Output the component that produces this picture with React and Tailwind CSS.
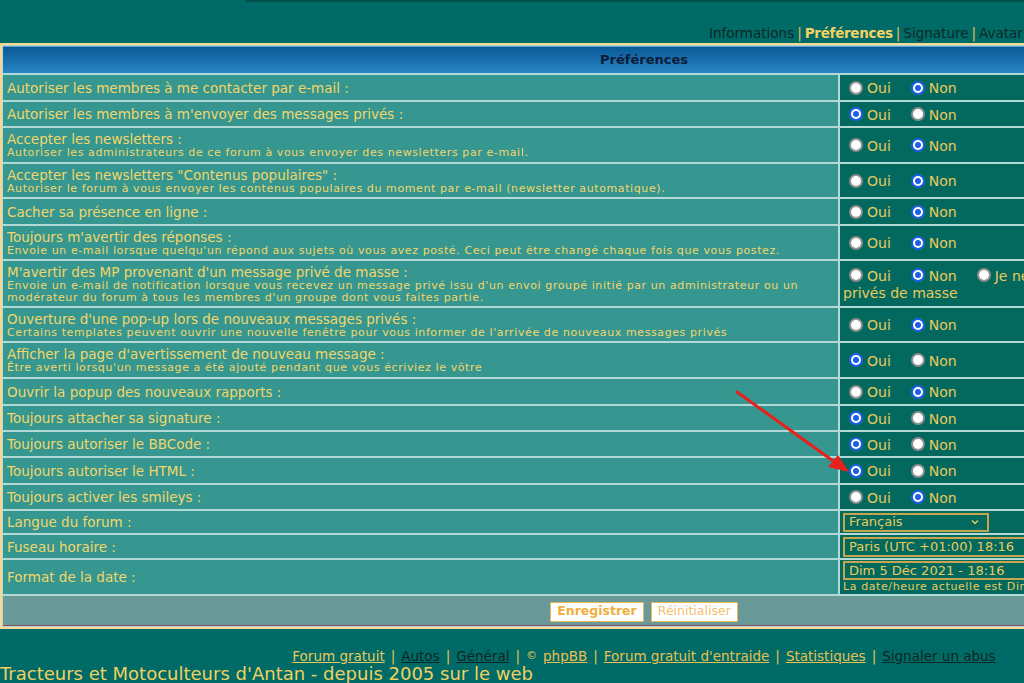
import React from "react";

const rows = [
  { t: "Autoriser les membres à me contacter par e-mail :", h: "h-[25px]", v: [false, true] },
  { t: "Autoriser les membres à m'envoyer des messages privés :", h: "h-[24px]", v: [true, false] },
  {
    t: "Accepter les newsletters :",
    d: "Autoriser les administrateurs de ce forum à vous envoyer des newsletters par e-mail.",
    h: "h-[34px]",
    v: [false, true],
  },
  {
    t: 'Accepter les newsletters "Contenus populaires" :',
    d: "Autoriser le forum à vous envoyer les contenus populaires du moment par e-mail (newsletter automatique).",
    h: "h-[33px]",
    v: [false, true],
  },
  { t: "Cacher sa présence en ligne :", h: "h-[25px]", v: [false, true] },
  {
    t: "Toujours m'avertir des réponses :",
    d: "Envoie un e-mail lorsque quelqu'un répond aux sujets où vous avez posté. Ceci peut être changé chaque fois que vous postez.",
    h: "h-[33px]",
    v: [false, true],
  },
  {
    t: "M'avertir des MP provenant d'un message privé de masse :",
    d: "Envoie un e-mail de notification lorsque vous recevez un message privé issu d'un envoi groupé initié par un administrateur ou un modérateur du forum à tous les membres d'un groupe dont vous faites partie.",
    h: "h-[45px]",
    v: [false, true],
    third: true,
  },
  {
    t: "Ouverture d'une pop-up lors de nouveaux messages privés :",
    d: "Certains templates peuvent ouvrir une nouvelle fenêtre pour vous informer de l'arrivée de nouveaux messages privés",
    h: "h-[33px]",
    v: [false, true],
  },
  {
    t: "Afficher la page d'avertissement de nouveau message :",
    d: "Être averti lorsqu'un message a été ajouté pendant que vous écriviez le vôtre",
    h: "h-[34px]",
    v: [true, false],
  },
  { t: "Ouvrir la popup des nouveaux rapports :", h: "h-[25px]", v: [false, true] },
  { t: "Toujours attacher sa signature :", h: "h-[24px]", v: [true, false] },
  { t: "Toujours autoriser le BBCode :", h: "h-[24px]", v: [true, false] },
  { t: "Toujours autoriser le HTML :", h: "h-[25px]", v: [true, false] },
  { t: "Toujours activer les smileys :", h: "h-[24px]", v: [false, true] },
];

function Radio({ on }) {
  if (on) {
    return (
      <span className="w-[14px] h-[14px] rounded-full bg-[#1d5fe6] flex items-center justify-center shrink-0">
        <span className="w-[10px] h-[10px] rounded-full bg-white flex items-center justify-center">
          <span className="w-[6px] h-[6px] rounded-full bg-[#1d5fe6]" />
        </span>
      </span>
    );
  }
  return <span className="w-[14px] h-[14px] rounded-full bg-white border-[2.5px] border-[#8e8e8e] shrink-0" />;
}

function Choice({ on, label, last }) {
  return (
    <span className={"flex items-center gap-[4px] " + (last ? "" : "mr-[20px]")}>
      <Radio on={on} />
      <span className="pt-[2px]">{label}</span>
    </span>
  );
}

function Label({ t, d }) {
  return (
    <div className="bg-[#35978f] px-[4px] flex flex-col justify-center text-[#f3d56b]">
      <div className="text-[13.5px] leading-[16px]">{t}</div>
      {d && <div className="text-[11px] leading-[12px] tracking-[0.6px]">{d}</div>}
    </div>
  );
}

export default function App() {
  return (
    <div className="w-[1024px] h-[683px] overflow-hidden bg-[#006b66] relative font-['DejaVu_Sans',sans-serif]">
      <div className="w-[1288px]">
        <div className="h-[2px] ml-[245px] bg-[#00504c]" />
        {/* onglets */}
        <div className="h-[41px] pl-[709px] flex items-end pb-[1px] text-[13.5px] leading-[18px] whitespace-nowrap text-[#0e2826]">
          <span>Informations</span>
          <span className="text-[#e8c050] mx-[3px]">|</span>
          <span className="font-bold text-[#f4d062] tracking-[-0.3px]">Préférences</span>
          <span className="text-[#e8c050] mx-[3px]">|</span>
          <span>Signature</span>
          <span className="text-[#e8c050] mx-[3px]">|</span>
          <span>Avatar</span>
        </div>

        <div className="border-2 border-[#f6d892]">
          <div className="bg-[#b3d9d6] p-[1px] flex flex-col gap-[2px]">
            <div className="h-[27px] bg-gradient-to-b from-[#0a5a98] to-[#2886c4] border-t border-[#5b9dcf] flex items-center justify-center text-[13px] font-bold text-[#0c1c38]">
              Préférences
            </div>

            <div className="grid grid-cols-[835px_1fr] gap-[2px]">
              {rows.map((r, i) => (
                <React.Fragment key={i}>
                  <div className={r.h + " grid"}>
                    <Label t={r.t} d={r.d} />
                  </div>
                  <div className="bg-[#03695f] pl-[9px] flex flex-col justify-center text-[14px] leading-[17px] text-[#e9c95c] whitespace-nowrap">
                    <div className="flex items-center">
                      <Choice on={r.v[0]} label="Oui" />
                      <Choice on={r.v[1]} label="Non" last={!r.third} />
                      {r.third && <Choice on={false} label="Je ne souhaite pas recevoir les messages" last />}
                    </div>
                    {r.third && <div className="-ml-[6px]">privés de masse</div>}
                  </div>
                </React.Fragment>
              ))}

              <div className="h-[22px] grid">
                <Label t="Langue du forum :" />
              </div>
              <div className="bg-[#03695f] pl-[3px] flex items-center">
                <div className="w-[146px] h-[19px] border-2 border-[#c4a64e] flex items-center justify-between px-[4px] text-[13px] text-[#e9c95c]">
                  <span>Français</span>
                  <svg width="10" height="10" viewBox="0 0 10 10" className="mr-[3px]">
                    <path d="M2 3.5 L5 6.5 L8 3.5" fill="none" stroke="#e9c95c" strokeWidth="1.5" />
                  </svg>
                </div>
              </div>

              <div className="h-[23px] grid">
                <Label t="Fuseau horaire :" />
              </div>
              <div className="bg-[#03695f] pl-[3px] flex items-center">
                <div className="w-[300px] h-[20px] border-2 border-[#c4a64e] flex items-center px-[4px] text-[13px] text-[#e9c95c] whitespace-nowrap">
                  Paris (UTC +01:00) 18:16
                </div>
              </div>

              <div className="h-[34px] grid">
                <Label t="Format de la date :" />
              </div>
              <div className="bg-[#03695f] pl-[3px] flex flex-col justify-center text-[#e9c95c] whitespace-nowrap">
                <div className="w-[300px] h-[19px] border-2 border-[#c4a64e] flex items-center px-[4px] text-[13px]">
                  Dim 5 Déc 2021 - 18:16
                </div>
                <div className="text-[11px] leading-[13px] tracking-[0.6px]">
                  La date/heure actuelle est Dim 5 Déc 2021 - 18:16
                </div>
              </div>
            </div>

            <div className="h-[30px] bg-[#6a9a98] border-b border-[#8c4a5c] flex items-center justify-center gap-[7px] pt-[2px]">
              <button className="h-[20px] px-[6px] bg-white border border-[#e8b45a] text-[12.5px] font-bold text-[#f0ae3c] leading-none">
                Enregistrer
              </button>
              <button className="h-[20px] px-[6px] bg-white border border-[#e8b45a] text-[12.5px] text-[#f3c070] leading-none">
                Réinitialiser
              </button>
            </div>
          </div>
        </div>

        {/* pied de page */}
        <div className="mt-[19px] flex justify-center gap-[6px] text-[13.5px] leading-[16px] whitespace-nowrap text-[#e8c050]">
          <span className="underline text-[#e9c95c]">Forum gratuit</span>
          <span>|</span>
          <span className="underline text-[#0c2624]">Autos</span>
          <span>|</span>
          <span className="underline text-[#0c2624]">Général</span>
          <span>|</span>
          <span className="text-[11px]">©</span>
          <span className="underline">phpBB</span>
          <span>|</span>
          <span className="underline">Forum gratuit d'entraide</span>
          <span>|</span>
          <span className="underline">Statistiques</span>
          <span>|</span>
          <span className="underline text-[#0c2624]">Signaler un abus</span>
        </div>
        <div className="text-[18px] leading-[20px] text-[#f0d060] whitespace-nowrap">
          Tracteurs et Motoculteurs d'Antan - depuis 2005 sur le web
        </div>
      </div>

      {/* flèche d'annotation */}
      <svg className="absolute left-0 top-0 pointer-events-none" width="1024" height="683">
        <line x1="737" y1="392" x2="836" y2="463" stroke="#e8201c" strokeWidth="3" strokeLinecap="round" />
        <polygon points="849,472 828,467 838,455" fill="#e8201c" />
      </svg>
    </div>
  );
}
